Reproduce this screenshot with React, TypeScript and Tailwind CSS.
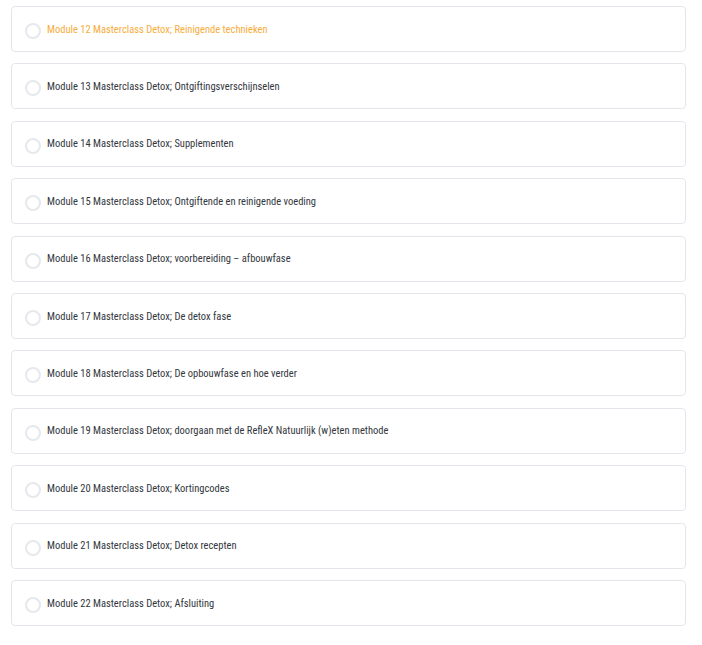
import React from "react";

const items = [
  "Module 12 Masterclass Detox; Reinigende technieken",
  "Module 13 Masterclass Detox; Ontgiftingsverschijnselen",
  "Module 14 Masterclass Detox; Supplementen",
  "Module 15 Masterclass Detox; Ontgiftende en reinigende voeding",
  "Module 16 Masterclass Detox; voorbereiding – afbouwfase",
  "Module 17 Masterclass Detox; De detox fase",
  "Module 18 Masterclass Detox; De opbouwfase en hoe verder",
  "Module 19 Masterclass Detox; doorgaan met de RefleX Natuurlijk (w)eten methode",
  "Module 20 Masterclass Detox; Kortingcodes",
  "Module 21 Masterclass Detox; Detox recepten",
  "Module 22 Masterclass Detox; Afsluiting",
];

export default function App() {
  return (
    <div className="w-[702px] h-[645px] bg-white pl-[11px] pt-[6px] flex flex-col gap-[11.4px]">
      {items.map((t, i) => (
        <div
          key={i}
          className="w-[675px] h-[46px] border border-[#e3e7ec] rounded-[4px] flex items-center pl-[13px] gap-[6px]"
        >
          <span className="w-[16px] h-[16px] rounded-full border-2 border-[#e5e8ec] shrink-0 mt-[4px]" />
          <span
            className={`text-[10.5px] mt-[1px] ${i === 0 ? "text-[#f7ac3b]" : "text-[#33373d]"}`}
            style={{ fontFamily: '"Roboto Condensed", Roboto, sans-serif' }}
          >
            {t}
          </span>
        </div>
      ))}
    </div>
  );
}
